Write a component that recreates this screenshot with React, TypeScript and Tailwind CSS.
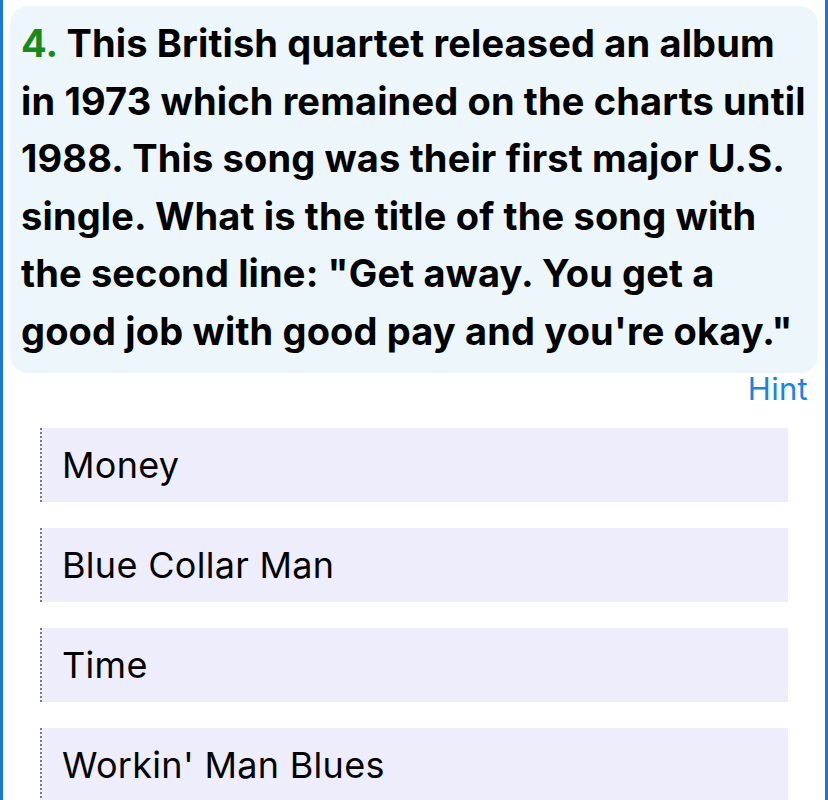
const options = ['Money', 'Blue Collar Man', 'Time', "Workin' Man Blues"];

export default function App() {
  return (
    <div
      className="h-[800px] w-[828px] overflow-hidden border-x-[3px] border-[#1b78d6] bg-white"
      style={{ fontFamily: 'Inter, "Noto Sans", sans-serif' }}
    >
      <div className="mx-[7px] mt-[6px] rounded-[18px] bg-[#edf6fa] px-[11px] pb-[13px] pt-[9px]">
        <p className="text-[38px] font-bold leading-[57.5px] tracking-[0.15px] text-black">
          <span className="text-[#168a1a]">4.</span> This British quartet released an album in 1973
          which remained on the charts until 1988. This song was their first major U.S. single. What
          is the title of the song with the second line: "Get away. You get a good job with good pay
          and you're okay."
        </p>
      </div>
      <div className="flex justify-end pr-[17px] pt-[1px]">
        <span className="text-[31px] leading-[30px] tracking-[0.3px] text-[#1a83e6]">Hint</span>
      </div>
      <div className="mt-[24px] flex flex-col gap-[26px] pl-[37px] pr-[37px]">
        {options.map((o) => (
          <div
            key={o}
            className="flex h-[74px] items-center border-l-2 border-dotted border-[#7a7a7a] bg-[#eeedfc] pl-[20px]"
          >
            <span className="text-[36px] tracking-[0.3px] text-black">{o}</span>
          </div>
        ))}
      </div>
    </div>
  );
}
